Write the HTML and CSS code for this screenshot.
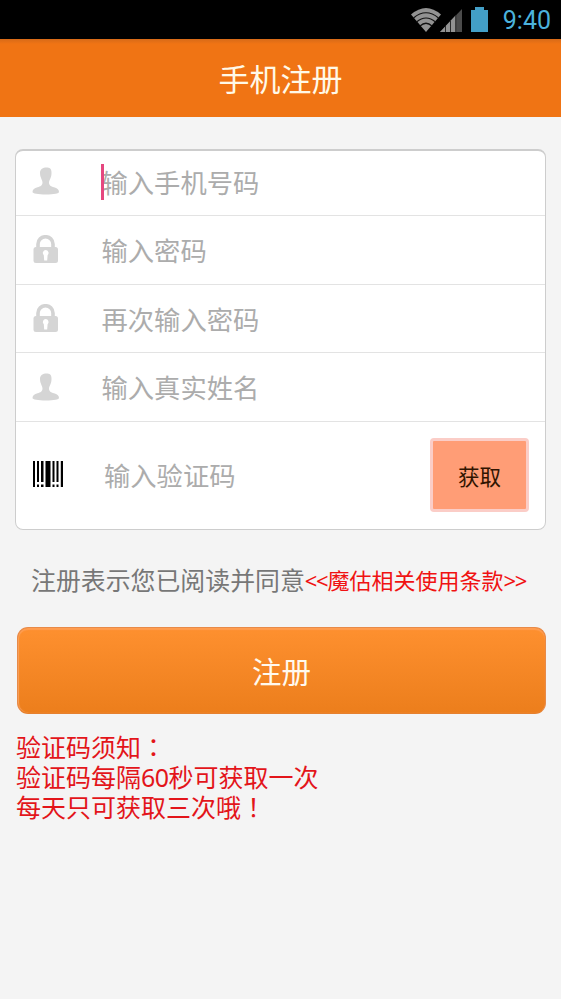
FILE: index.html
```html
<!DOCTYPE html>
<html lang="zh-CN">
<head>
<meta charset="utf-8">
<title>手机注册</title>
<link rel="stylesheet" href="styles.css">
</head>
<body>
<svg width="0" height="0" class="defs" aria-hidden="true">
  <symbol id="user" viewBox="0 0 28 28">
    <path d="M8 6C8 2 11 .5 14.5 .5c3 0 5.200 1 5 5.500 0 2-.4 3.500-.8 4.500-.4 2-1.700 3-1.700 5 0 3 2 3.800 5 4.800 3 1 5 2.200 5 4.700 0 1.500-5 2.500-13 2.500S.500 26.500.500 25c0-2.500 2-3.700 5-4.700s5-1.800 5-4.800c0-2-1.200-3-1.600-5C8.500 9.500 8 8 8 6z" fill="#d5d5d5"/>
  </symbol>
  <symbol id="lock" viewBox="0 0 28 28">
    <path d="M6 14V9a7.500 7.300 0 0 1 15 0v5" fill="none" stroke="#d3d3d3" stroke-width="3.600"/>
    <rect x="1.500" y="12" width="24.500" height="16" rx="2.500" fill="#d5d5d5"/>
    <path d="M13.700 15a3 3 0 0 1 1.900 5.200l-.4 5.300h-3l-.4-5.300a3 3 0 0 1 1.900-5.200z" fill="#fff"/>
  </symbol>
</svg>
<header class="status">
  <svg class="wifi" width="32" height="26" viewBox="0 0 32 26">
    <path d="M1 7.500Q16-5.500 31 7.500L16 25z" fill="#929292"/>
    <g fill="none" stroke="#111" stroke-width="1.200">
      <path d="M3.500 11Q16 .5 28.500 11"/>
      <path d="M6.500 15Q16 7 25.500 15"/>
      <path d="M10 19Q16 13.500 22 19"/>
    </g>
  </svg>
  <svg class="signal" width="23" height="26" viewBox="0 0 23 26">
    <path d="M0 25L22 2V25z" fill="#4b4b4b"/>
    <path d="M0 25L15.500 8.500V25z" fill="#929292"/>
    <path d="M5.500 19v6M10.500 14v11M15.800 8v17" stroke="#292929"/>
  </svg>
  <svg class="battery" width="17" height="26" viewBox="0 0 17 26">
    <path d="M0 3h4V0h9v3h4v22H0z" fill="#439fc7"/>
  </svg>
  <time class="clock">9:40</time>
</header>
<h1 class="title">手机注册</h1>
<main class="page">
  <section class="form">
    <div class="row"><svg class="icon"><use href="#user"/></svg><i class="caret"></i><span>输入手机号码</span></div>
    <div class="row"><svg class="icon"><use href="#lock"/></svg><span>输入密码</span></div>
    <div class="row"><svg class="icon"><use href="#lock"/></svg><span>再次输入密码</span></div>
    <div class="row"><svg class="icon"><use href="#user"/></svg><span>输入真实姓名</span></div>
    <div class="row code">
      <svg class="barcode" width="30" height="26" viewBox="0 0 30 26">
        <path d="M0 0h2v26H0zM4 0h2v21H4zM8 0h2.500v21H8zM12.500 0h5v26h-5zM19.500 0h2v21h-2zM23.500 0h2v21h-2zM27.800 0H30v26h-2.200zM4 23.500h2V26H4zM8 23.500h2.500V26H8zM19.500 23.500h2V26h-2zM23.500 23.500h2V26h-2z"/>
      </svg>
      <span>输入验证码</span>
      <button class="get">获取</button>
    </div>
  </section>
  <p class="terms"><span>注册表示您已阅读并同意</span><a><span class="angle">&lt;&lt;</span>魔估相关使用条款<span class="angle">&gt;&gt;</span></a></p>
  <button class="submit">注册</button>
  <div class="notes">
    <p>验证码须知<span class="mark" lang="zh-TW">：</span></p>
    <p>验证码每隔<span class="num">60</span>秒可获取一次</p>
    <p>每天只可获取三次哦<span class="mark" lang="zh-TW">！</span></p>
  </div>
</main>
</body>
</html>
```
FILE: styles.css
```css
* { box-sizing: border-box; }
body {
  margin: 0;
  background: #f4f4f4;
  font-family: "Noto Sans", "Noto Sans CJK SC", sans-serif;
}
.defs { display: block; }
button { font-family: inherit; padding: 0; }
.status {
  height: 39px;
  background: #000;
  display: flex;
  align-items: flex-start;
  padding: 7px 10px 0 410px;
}
.signal { margin-left: -2px; }
.battery { margin-left: 8px; }
.clock {
  margin-left: auto;
  font: 25px/27px Roboto, sans-serif;
  color: #4bb2dc;
}
.title {
  margin: 0;
  height: 78px;
  background: linear-gradient(#d76a18, #f07414 5px);
  color: #fff9e8;
  font-size: 31px;
  font-weight: 400;
  line-height: 80px;
  text-align: center;
}
.page { padding: 32px 15px 0; }
.form {
  height: 381px;
  background: #fff;
  border: 1px solid #cdcdcd;
  border-top-width: 2px;
  border-radius: 8px;
}
.row {
  position: relative;
  display: flex;
  align-items: center;
  height: 68.7px;
  padding: 0 16px 0 16px;
  border-bottom: 1px solid #e3e3e3;
  color: #acacac;
  font-family: "Noto Sans CJK SC", sans-serif;
  font-size: 26.3px;
  line-height: 36px;
}
.row:first-child { height: 65px; padding-bottom: 2px; }
.row .icon { width: 28px; height: 28px; margin: 0 41.500px 1px 0; }
.row:first-child .icon { margin-bottom: 3px; }
.caret {
  position: absolute;
  left: 85px;
  top: 13px;
  width: 3px;
  height: 36px;
  background: #e5477f;
}
.row.code { height: 106px; border: 0; }
.barcode { margin: 0 41px 3px 1px; }
.get {
  width: 99px;
  height: 74px;
  margin-left: auto;
  background: #ff9d76;
  border: 3px solid #fbcdc7;
  border-radius: 4px;
  color: #301400;
  font-size: 21.500px;
}
.terms {
  display: flex;
  margin: 32px 0 0 16px;
  height: 36px;
  line-height: 36px;
  font-size: 24.9px;
  color: #777;
  white-space: nowrap;
}
.terms a { font-size: 22px; color: #f01212; }
.angle { letter-spacing: -1.300px; }
.submit {
  display: block;
  width: 529px;
  height: 87px;
  margin: 29px 0 0 2px;
  border: 1px solid #e88a48;
  border-bottom-color: #e6802e;
  border-radius: 11px;
  background: linear-gradient(#fe902f, #ec7e1c);
  box-shadow: inset 0 2px 1px #ff9d50, inset 1px 0 1px #f9a25c;
  color: #fff9ee;
  font-size: 29.500px;
}
.notes {
  margin: 18px 0 0 1px;
  font-size: 25px;
  line-height: 30px;
  color: #e3151a;
}
.notes p { margin: 0; height: 30px; }
.num { letter-spacing: -.6px; }
.mark { font-family: "Noto Sans CJK TC", sans-serif; line-height: 1; }
```
